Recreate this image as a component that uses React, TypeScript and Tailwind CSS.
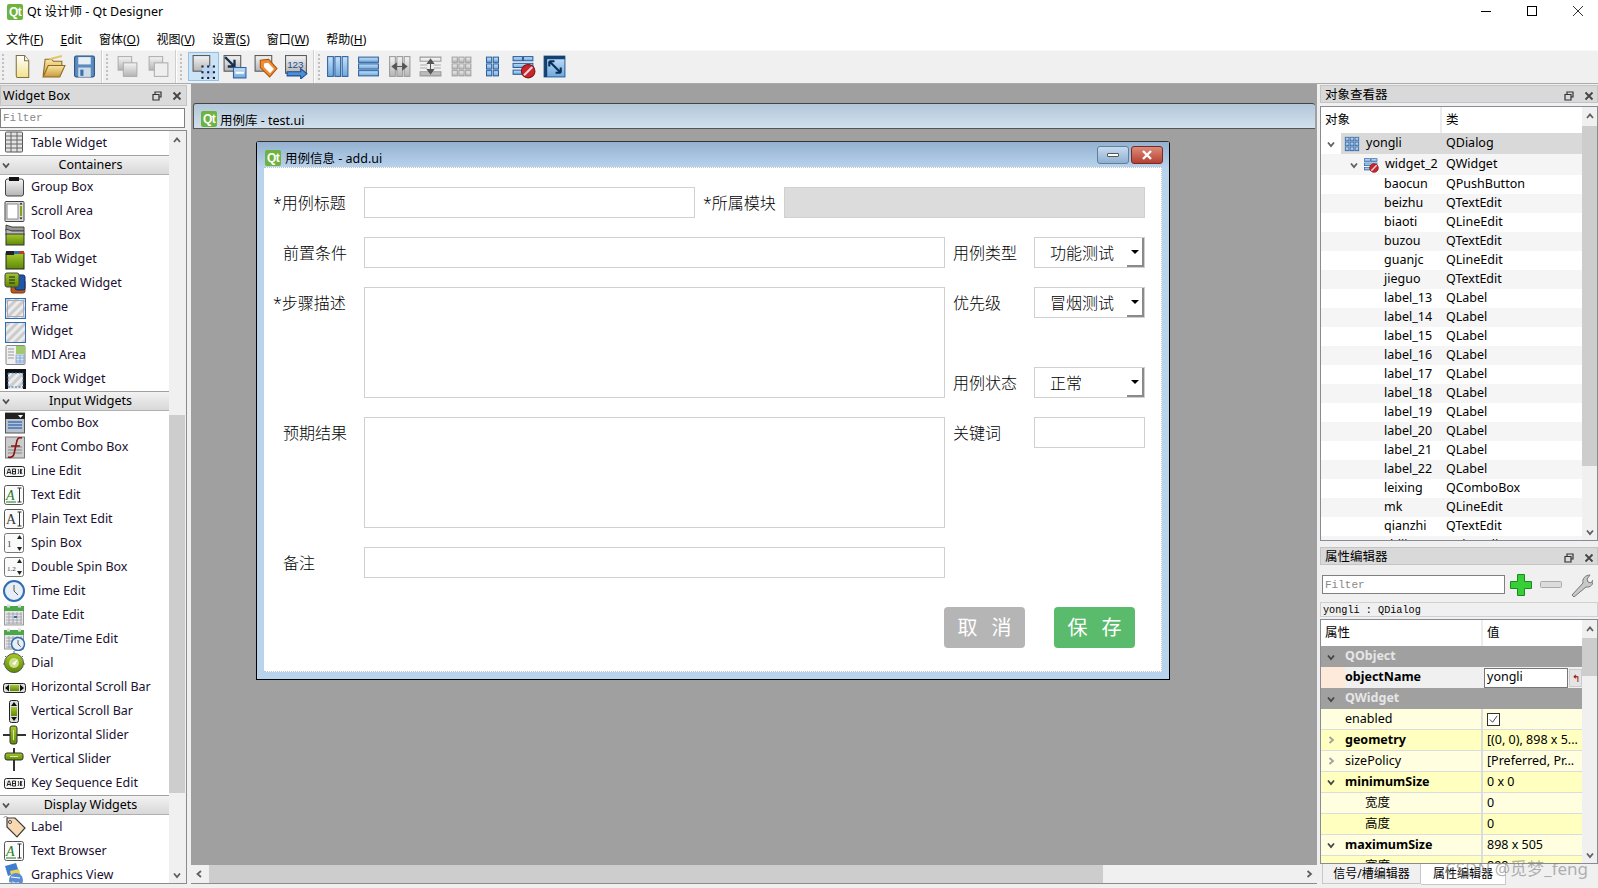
import React from 'react';

const FONT = "font-['Noto_Sans','Noto_Sans_CJK_SC',sans-serif]";

const Ic = ({ children, size = 'h-6 w-6' }: { children: React.ReactNode; size?: string }) => (
  <svg viewBox="0 0 24 24" className={`${size} shrink-0`}>
    {children}
  </svg>
);

const Chevron = ({ dir = 'down', color = '#606060' }: { dir?: 'up' | 'down' | 'left' | 'right'; color?: string }) => {
  const pts = {
    up: '2,7 5,3.5 8,7',
    down: '2,3.5 5,7 8,3.5',
    left: '7,2 3.5,5 7,8',
    right: '3.5,2 7,5 3.5,8',
  }[dir];
  return (
    <svg viewBox="0 0 10 10" className="h-[10px] w-[10px] shrink-0">
      <polyline points={pts} fill="none" stroke={color} strokeWidth="1.8" />
    </svg>
  );
};

const FloatClose = () => (
  <div className="flex items-center gap-[10px]">
    <svg viewBox="0 0 10 10" className="h-[10px] w-[10px]">
      <path d="M3 3V1h6v5H7M1 3.5h6v5.5H1z" fill="none" stroke="#333" strokeWidth="1.2" />
    </svg>
    <svg viewBox="0 0 10 10" className="h-[10px] w-[10px]">
      <path d="M1.5 1.5l7 7M8.5 1.5l-7 7" stroke="#444" strokeWidth="1.8" />
    </svg>
  </div>
);

const Defs = () => (
  <svg className="absolute h-0 w-0">
    <defs>
      <linearGradient id="gGray" x1="0" y1="0" x2="0" y2="1">
        <stop offset="0" stopColor="#f4f4f4" />
        <stop offset="1" stopColor="#b4b4b4" />
      </linearGradient>
      <linearGradient id="gGreen" x1="0" y1="0" x2="0" y2="1">
        <stop offset="0" stopColor="#a6c82a" />
        <stop offset="1" stopColor="#5f8a08" />
      </linearGradient>
      <linearGradient id="gFolder" x1="0" y1="0" x2="0" y2="1">
        <stop offset="0" stopColor="#fbe7a6" />
        <stop offset="1" stopColor="#c99a3c" />
      </linearGradient>
      <linearGradient id="gPage" x1="0" y1="0" x2="0" y2="1">
        <stop offset="0" stopColor="#ffffff" />
        <stop offset="1" stopColor="#f3e28c" />
      </linearGradient>
      <linearGradient id="gBlue" x1="0" y1="0" x2="0" y2="1">
        <stop offset="0" stopColor="#c6e2fa" />
        <stop offset="1" stopColor="#6ea8dc" />
      </linearGradient>
      <pattern id="hatch" width="6" height="6" patternUnits="userSpaceOnUse" patternTransform="rotate(45)">
        <rect width="6" height="6" fill="#ececec" />
        <rect width="3" height="6" fill="#cccccc" />
      </pattern>
    </defs>
  </svg>
);

const AI = ({ green }: { green?: boolean }) => (
  <>
    <rect x="2.5" y="2.5" width="19" height="19" rx="2" fill="#fafafa" stroke="#555" />
    <text x="4" y="17" fontSize="14" fontFamily="Liberation Serif, serif" fontStyle={green ? 'italic' : 'normal'} fill={green ? '#1d7a1d' : '#333'}>
      A
    </text>
    {green && <path d="M4 19h10" stroke="#1d7a1d" />}
    <path d="M15.5 5h4M17.5 5v14M15.5 19h4" stroke="#333" fill="none" />
  </>
);

const Spin = ({ t }: { t: string }) => (
  <>
    <rect x="2.5" y="2.5" width="19" height="19" rx="2" fill="#fafafa" stroke="#777" />
    <text x="5" y="16" fontSize={t.length > 1 ? 7 : 9} fontFamily="Liberation Serif, serif" fill="#333">
      {t}
    </text>
    <path d="M15 8l2.5-4 2.5 4zM15 16l2.5 4 2.5-4z" fill="#222" />
  </>
);

const LineEd = () => (
  <>
    <rect x="2.5" y="7.5" width="20" height="10" rx="2" fill="#f4f4f4" stroke="#222" />
    <path d="M5 15l1.5-5h1l1.500 5M5.600 13.500h2.800M10.500 10h3v5h-3zM10.500 12.500h3M16 10c1 1.500 1 3.500 0 5M18.500 10v5M20 10c-1 1.500-1 3.500 0 5" stroke="#111" strokeWidth="0.9" fill="none" />
  </>
);

const Clock = ({ cx = 12, cy = 12, r = 10 }: { cx?: number; cy?: number; r?: number }) => (
  <>
    <circle cx={cx} cy={cy} r={r} fill="#e8eef6" stroke="#2f6db5" strokeWidth={r > 8 ? 2 : 1.5} />
    <path d={`M${cx} ${cy - r * 0.6}V${cy}L${cx + r * 0.4} ${cy + r * 0.4}`} stroke="#555" fill="none" />
  </>
);

const Calendar = () => (
  <>
    <rect x="2.5" y="4" width="19" height="18" fill="#e6e6e6" stroke="#999" />
    <rect x="2" y="3" width="20" height="5" fill="#4aa84a" />
    <rect x="5" y="1.5" width="3" height="3" fill="#ddd" />
    <rect x="16" y="1.5" width="3" height="3" fill="#ddd" />
    <path d="M4 11h16M4 14h16M4 17h16M4 20h16M7 9v12M11 9v12M15 9v12M19 9v12" stroke="#9a9aa8" strokeWidth="0.8" />
  </>
);

const widgetIcons: Record<string, React.ReactNode> = {
  table: (
    <>
      <rect x="3.5" y="1" width="17" height="20" rx="1" fill="#e4e4e4" stroke="#555" />
      <path d="M3.500 5h17M3.500 9h17M3.500 13h17M3.500 17h17M9 1v20M15 1v20" stroke="#666" />
    </>
  ),
  group: (
    <>
      <rect x="3.5" y="4" width="18" height="17" rx="2" fill="url(#gGray)" stroke="#444" />
      <rect x="7" y="2" width="10" height="4" fill="#111" />
    </>
  ),
  scroll: (
    <>
      <rect x="3" y="2.5" width="19" height="20" rx="1" fill="#ddd" stroke="#444" />
      <rect x="5" y="5" width="11" height="15" fill="#fff" stroke="#888" />
      <rect x="18" y="7" width="2" height="10" fill="#7da513" />
      <path d="M17.500 5.500h3l-1.500-2zM17.500 18.500h3l-1.500 2z" fill="#111" />
    </>
  ),
  toolbox: (
    <>
      <path d="M4 2l6 2h12v4H4z" fill="#999" stroke="#444" />
      <path d="M4 6l6 2h12v4H4z" fill="#bbb" stroke="#444" />
      <rect x="4" y="11" width="18" height="11" fill="url(#gGreen)" stroke="#333" />
    </>
  ),
  tab: (
    <>
      <rect x="4" y="6" width="18" height="16" fill="url(#gGreen)" stroke="#222" />
      <rect x="4" y="4" width="8" height="4" fill="#222" />
      <rect x="12" y="4" width="5" height="3" fill="#2b6fb5" />
      <rect x="17" y="4" width="5" height="3" fill="#c03a2a" />
    </>
  ),
  stacked: (
    <>
      <rect x="9" y="9" width="14" height="13" rx="2" fill="#bf5a16" stroke="#7a3208" />
      <rect x="13" y="4" width="10" height="15" rx="2" fill="#1f57a8" stroke="#0b2f6a" />
      <rect x="3" y="2" width="14" height="14" rx="2" fill="url(#gGreen)" stroke="#444" />
      <path d="M7 6h6M7 9h6M7 12h6" stroke="#222" strokeWidth="1.2" />
    </>
  ),
  frame: (
    <>
      <rect x="3.5" y="3.5" width="20" height="20" fill="url(#hatch)" stroke="#2f6db5" />
      <rect x="5.5" y="5.5" width="16" height="16" fill="none" stroke="#aab" />
    </>
  ),
  widget: <rect x="3.5" y="3.5" width="20" height="20" fill="url(#hatch)" stroke="#2f6db5" />,
  mdi: (
    <>
      <rect x="4" y="2.5" width="19" height="19" rx="1" fill="#f0f0f0" stroke="#888" />
      <rect x="14" y="3" width="9" height="8" fill="#9fc96a" />
      <path d="M6 6h6M6 9h6M6 12h6M6 15h6" stroke="#999" />
      <rect x="14" y="12" width="8" height="8" fill="#cfe2f5" stroke="#6a8fc0" strokeWidth="0.6" />
      <path d="M14 15h8M14 18h8M18 12v8" stroke="#6a8fc0" strokeWidth="0.6" />
    </>
  ),
  dock: (
    <>
      <rect x="3" y="2" width="22" height="20" fill="#111" />
      <rect x="6" y="6" width="15" height="16" fill="#e6e6e6" />
      <rect x="6" y="6" width="15" height="14" fill="url(#hatch)" stroke="#2f6db5" strokeDasharray="2 1.5" />
    </>
  ),
  combo: (
    <>
      <rect x="3.5" y="2" width="19" height="20" fill="#b9c2cc" stroke="#555" />
      <rect x="3" y="2" width="20" height="6" fill="#222" />
      <path d="M16 4h5l-2.500 3z" fill="#fff" />
      <path d="M6 11h14M6 14h14M6 17h14" stroke="#5d87bd" strokeWidth="2" />
    </>
  ),
  font: (
    <>
      <rect x="3.5" y="2" width="19" height="21" fill="#ccc" stroke="#777" />
      <path d="M6 12h14M6 15h14M6 18h14" stroke="#aaa" strokeWidth="2" />
      <path d="M20 3c-5-1-5 2-6 7l-2 9c-.5 2.500-3 4-6 3M9 11h9" fill="none" stroke="#8a1414" strokeWidth="1.6" />
    </>
  ),
  line: <LineEd />,
  text: <AI green />,
  plain: <AI />,
  spin: <Spin t="1" />,
  dspin: <Spin t="1.2" />,
  time: <Clock />,
  date: (
    <>
      <Calendar />
      <rect x="12" y="13" width="3" height="2" fill="#2f6db5" />
    </>
  ),
  datetime: (
    <>
      <Calendar />
      <Clock cx={16} cy={17} r={6.5} />
    </>
  ),
  dial: (
    <>
      <circle cx="12" cy="12" r="9.5" fill="url(#gGreen)" stroke="#555" />
      <path d="M3 5l2 2M21 5l-2 2M12 0v3M1 13h2M21 13h2" stroke="#666" />
      <circle cx="12" cy="12" r="5" fill="#cfdc8a" />
      <path d="M10 13l6-5-3 6z" fill="#fff" />
    </>
  ),
  hscroll: (
    <>
      <rect x="1.5" y="8.5" width="22" height="9" rx="2" fill="#ddd" stroke="#222" />
      <path d="M7 9.500v7l-4-3.500zM18 9.500v7l4-3.500z" fill="#111" />
      <rect x="8" y="10" width="9" height="6" fill="url(#gGreen)" />
    </>
  ),
  vscroll: (
    <>
      <rect x="7.5" y="1.5" width="9" height="22" rx="2" fill="#ddd" stroke="#222" />
      <path d="M9 7h6l-3-4zM9 18h6l-3 4z" fill="#111" />
      <rect x="9" y="8" width="6" height="9" fill="url(#gGreen)" />
    </>
  ),
  hslider: (
    <>
      <path d="M1 12h23" stroke="#333" strokeWidth="2" />
      <rect x="8" y="3" width="7" height="18" rx="2" fill="url(#gGreen)" stroke="#333" />
      <path d="M11.500 7v10" stroke="#dfe8a8" />
    </>
  ),
  vslider: (
    <>
      <path d="M12 1v23" stroke="#333" strokeWidth="2" />
      <rect x="3" y="6" width="18" height="7" rx="2" fill="url(#gGreen)" stroke="#333" />
      <path d="M8 9.500h8" stroke="#dfe8a8" />
    </>
  ),
  key: <LineEd />,
  label: (
    <>
      <path d="M2 3c0-2 3-2 4 0" stroke="#888" fill="none" />
      <path d="M5 3h8l10 10-8 9L5 12z" fill="#f8d9b4" stroke="#3c3c3c" strokeWidth="1.2" />
      <circle cx="8" cy="7" r="1.5" fill="#fff" stroke="#444" />
    </>
  ),
  browser: <AI green />,
  graphics: (
    <>
      <path d="M3 3l11-3 3 9-11 4z" fill="#3f7fcf" />
      <path d="M8 8l9-2 2 8-9 3z" fill="#e8d25a" />
      <circle cx="14" cy="17" r="7" fill="#5a8cd6" />
      <path d="M9 14l9 1" stroke="#fff" />
      <text x="6" y="23" fontSize="7" fontFamily="Liberation Sans, sans-serif" fill="#eef">
        abc
      </text>
    </>
  ),
};

type WbItem = string | [string, string];
const widgetBox: WbItem[] = [
  ['table', 'Table Widget'],
  'Containers',
  ['group', 'Group Box'],
  ['scroll', 'Scroll Area'],
  ['toolbox', 'Tool Box'],
  ['tab', 'Tab Widget'],
  ['stacked', 'Stacked Widget'],
  ['frame', 'Frame'],
  ['widget', 'Widget'],
  ['mdi', 'MDI Area'],
  ['dock', 'Dock Widget'],
  'Input Widgets',
  ['combo', 'Combo Box'],
  ['font', 'Font Combo Box'],
  ['line', 'Line Edit'],
  ['text', 'Text Edit'],
  ['plain', 'Plain Text Edit'],
  ['spin', 'Spin Box'],
  ['dspin', 'Double Spin Box'],
  ['time', 'Time Edit'],
  ['date', 'Date Edit'],
  ['datetime', 'Date/Time Edit'],
  ['dial', 'Dial'],
  ['hscroll', 'Horizontal Scroll Bar'],
  ['vscroll', 'Vertical Scroll Bar'],
  ['hslider', 'Horizontal Slider'],
  ['vslider', 'Vertical Slider'],
  ['key', 'Key Sequence Edit'],
  'Display Widgets',
  ['label', 'Label'],
  ['browser', 'Text Browser'],
  ['graphics', 'Graphics View'],
];

const QtLogo = () => (
  <div className="flex h-[16px] w-[16px] shrink-0 items-center justify-center rounded-[2px] bg-[#6db33f] font-['Liberation_Sans',sans-serif] text-[12px] leading-none font-bold tracking-tighter text-white">
    Qt
  </div>
);

const Grip = () => (
  <div className="mr-[2px] ml-[2px] flex h-[26px] w-[3px] flex-col justify-between">
    {[0, 1, 2, 3, 4, 5, 6].map((i) => (
      <div key={i} className="h-[2px] w-[2px] bg-[#c0c0c0]" />
    ))}
  </div>
);

const Sep = () => <div className="mx-[1px] h-[33px] w-[2px] border-r border-l border-r-white border-l-[#cfcfcf]" />;

const Bars = ({ vertical, gray }: { vertical?: boolean; gray?: boolean }) => {
  const fill = gray ? 'url(#gGray)' : 'url(#gBlue)';
  const stroke = gray ? '#9a9a9a' : '#2c5f9e';
  return (
    <>
      {[0, 1, 2].map((i) =>
        vertical ? (
          <rect key={i} x={2.5 + i * 7} y="2.5" width="5.5" height="19" fill={fill} stroke={stroke} />
        ) : (
          <rect key={i} x="2.5" y={3 + i * 6.5} width="19" height="5" fill={fill} stroke={stroke} />
        ),
      )}
    </>
  );
};

const Grid3 = ({ gray, full }: { gray?: boolean; full?: boolean }) => (
  <>
    {[0, 1, 2].map((r) =>
      (gray || full ? [0, 1, 2] : [0.5, 1.5]).map((c) => (
        <rect
          key={`${r}-${c}`}
          x={3 + c * 6.5}
          y={3 + r * 6.5}
          width="5"
          height="5"
          fill={gray ? 'url(#gGray)' : 'url(#gBlue)'}
          stroke={gray ? '#a0a0a0' : '#2c5f9e'}
        />
      )),
    )}
  </>
);

const BreakLayout = () => (
  <>
    <rect x="2" y="2.5" width="9" height="4" fill="url(#gBlue)" stroke="#2c5f9e" />
    <rect x="12" y="2.5" width="9" height="4" fill="url(#gBlue)" stroke="#2c5f9e" />
    <rect x="2" y="9" width="19" height="4" fill="url(#gBlue)" stroke="#2c5f9e" />
    <rect x="2" y="15.5" width="10" height="4" fill="url(#gBlue)" stroke="#2c5f9e" />
    <circle cx="16.5" cy="16.5" r="6.5" fill="#c8262c" stroke="#7c1014" />
    <path d="M12.500 20.500l8-8" stroke="#f3d9d9" strokeWidth="2" />
  </>
);

const Copies = ({ light }: { light?: boolean }) => (
  <>
    <rect x="3" y="2.5" width="13" height="13" fill="url(#gGray)" stroke="#adadad" />
    <rect x="8" y="8.5" width="13" height="13" fill={light ? '#efefef' : 'url(#gGray)'} stroke="#adadad" />
  </>
);

const handles: [number, number][] = [
  [10, 11],
  [15.5, 11],
  [21, 11],
  [10, 16.5],
  [21, 16.5],
  [10, 22],
  [15.5, 22],
  [21, 22],
];

const toolbarGroups: React.ReactNode[][] = [
  [
    <>
      <path d="M6 1.500h8l4 5v16H7c-1 0-1-1-1-2z" fill="url(#gPage)" stroke="#7d7040" />
      <path d="M14 1.500v5h4" fill="#fff" stroke="#7d7040" />
    </>,
    <>
      <path d="M2 21l2-16h6l2 2h8v4" fill="url(#gFolder)" stroke="#8b6a1e" />
      <path d="M2 22l5-11h16l-5 11z" fill="url(#gFolder)" stroke="#8b6a1e" />
      <path d="M8 5l12-3" stroke="#e4c36a" strokeWidth="2" />
    </>,
    <>
      <rect x="2.5" y="2" width="19" height="20" rx="1.5" fill="#5a8cc0" stroke="#234e80" />
      <rect x="6" y="3" width="12" height="7" fill="#e6eef6" />
      <rect x="6" y="13" width="12" height="9" fill="#cfdbe8" />
      <rect x="8" y="15" width="3" height="6" fill="#3b72ad" />
    </>,
  ],
  [<Copies />, <Copies light />],
  [
    <>
      <rect x="2" y="1.5" width="16" height="15" fill="url(#gGray)" stroke="#555" />
      <rect x="10.5" y="11.5" width="11" height="11" fill="#bcd4f2" />
      {handles.map(([x, y]) => (
        <rect key={`${x}-${y}`} x={x} y={y} width="2" height="2" fill="#14243a" />
      ))}
      <rect x="15.5" y="16.5" width="2" height="2" fill="#14243a" />
    </>,
    <>
      <rect x="2" y="1.5" width="16" height="15" fill="url(#gGray)" stroke="#555" />
      <path d="M3 3l9 9M12 5.500V12H5.500" stroke="#14304f" strokeWidth="2.2" fill="none" />
      <rect x="11" y="13" width="12" height="10" fill="url(#gBlue)" stroke="#2c5f9e" />
      <rect x="13" y="17" width="8" height="2" fill="#fff" />
    </>,
    <>
      <rect x="2" y="1.5" width="16" height="15" fill="url(#gGray)" stroke="#555" />
      <path d="M7 6l8-1 8 9-7 8-9-9z" fill="#f28a30" stroke="#a65411" />
      <path d="M10.500 9l4-.5 5.500 6-3.500 4-6-6z" fill="#fff" />
    </>,
    <>
      <rect x="1.5" y="1.5" width="20" height="17" fill="url(#gGray)" stroke="#555" />
      <text x="3" y="13" fontSize="9.5" fontFamily="Liberation Sans, sans-serif" fill="#1d4d8f">
        123
      </text>
      <path d="M3 17h13v-3l6 5-6 5v-3H3z" fill="#4d8fd6" stroke="#1d4d8f" />
    </>,
  ],
  [
    <Bars vertical />,
    <Bars />,
    <>
      <Bars vertical gray />
      <path d="M5 12h14M5 12l4-3v6zM19 12l-4-3v6z" fill="#555" stroke="#555" />
    </>,
    <>
      <path d="M2 3h20v4H2zM2 17h20v4H2z" fill="url(#gGray)" stroke="#9a9a9a" />
      <path d="M12 5v14M12 5L9 9h6zM12 19l-3-4h6z" fill="#555" stroke="#555" />
      <path d="M2 10.500h7M15 10.500h7M2 13.500h7M15 13.500h7" stroke="#aaa" />
    </>,
    <Grid3 gray />,
    <Grid3 />,
    <BreakLayout />,
    <>
      <rect x="2" y="2" width="20" height="20" fill="url(#gBlue)" stroke="#2c5f9e" />
      <path d="M2 2h20v3H5v17H2z" fill="#16406f" />
      <path d="M7 7l11 11M7 7h5M7 7v5M18 18h-5M18 18v-5" stroke="#0a2f58" strokeWidth="2" fill="none" />
    </>,
  ],
];

const groupOffset = ['ml-0', 'ml-[1px]', 'ml-[3px]', '-ml-[1px]'];

const Toolbar = () => (
  <div className="flex h-[34px] shrink-0 items-center border-t border-b border-t-[#f8f8f8] border-b-[#aaaaaa] bg-[#f0f0f0] pb-[1px]">
    {toolbarGroups.map((group, gi) => (
      <React.Fragment key={gi}>
        <Grip />
        <div className={`flex ${groupOffset[gi]}`}>
          {group.map((icon, i) => (
            <div
              key={i}
              className={`flex h-[29px] w-[31px] items-center justify-center ${
                gi === 2 && i === 0 ? 'border border-[#8fc1ea] bg-[#cde4f7]' : ''
              }`}
            >
              <Ic size="h-[25px] w-[25px]">{icon}</Ic>
            </div>
          ))}
        </div>
        {gi < 3 && <Sep />}
      </React.Fragment>
    ))}
  </div>
);

const WidgetBox = () => (
  <div className="flex w-[187px] shrink-0 flex-col">
    <div className="mt-[1px] flex h-[21px] items-center justify-between border border-[#c4c4c4] bg-[#dadada] pt-[1px] pr-[4px] pl-[2px] text-[12.5px]">
      <span>Widget Box</span>
      <FloatClose />
    </div>
    <div className="mt-[2px] flex h-[20px] w-[185px] items-center border border-[#808080] bg-white pt-[1px] pl-[2px] font-['Liberation_Mono',monospace] text-[11px] text-[#888]">
      Filter
    </div>
    <div className="mt-[2px] flex h-[754px] overflow-hidden border-t border-r border-b border-[#8c8c8c]">
      <div className="w-[169px] overflow-hidden bg-white">
        {widgetBox.map((item) =>
          typeof item === 'string' ? (
            <div
              key={item}
              className="relative flex h-[20px] items-center justify-center border-t border-b border-t-[#a0a0a0] border-b-[#b0b0b0] bg-gradient-to-b from-[#f2f2f2] to-[#d8d8d8] pl-[12px] text-[12.5px]"
            >
              <span className="absolute left-[1px]">
                <Chevron color="#505050" />
              </span>
              {item}
            </div>
          ) : (
            <div key={item[1]} className="flex h-[24px] items-center gap-[5px] pl-[2px] text-[12.5px] text-[#1a1030]">
              <Ic>{widgetIcons[item[0]]}</Ic>
              <span>{item[1]}</span>
            </div>
          ),
        )}
      </div>
      <div className="flex w-[16px] flex-col items-center bg-[#f0f0f0]">
        <div className="flex h-[17px] items-center">
          <Chevron dir="up" />
        </div>
        <div className="mt-[267px] h-[378px] w-full bg-[#cdcdcd]" />
        <div className="mt-auto flex h-[17px] items-center">
          <Chevron />
        </div>
      </div>
    </div>
  </div>
);

const Field = ({ w, disabled, h = 'h-[31px]' }: { w: string; disabled?: boolean; h?: string }) => (
  <div className={`${w} ${h} shrink-0 border border-[#d0d0d0] ${disabled ? 'bg-[#dcdcdc]' : 'bg-white'}`} />
);

const Combo = ({ value }: { value: string }) => (
  <div className="flex h-[31px] w-[111px] shrink-0 items-center border border-[#d0d0d0] bg-white pl-[15px]">
    <span className="flex-1">{value}</span>
    <div className="flex h-[29px] w-[17px] items-center justify-center border-r-2 border-b-2 border-[#8a8a8a]">
      <div className="h-0 w-0 border-t-[4px] border-r-[4px] border-l-[4px] border-t-black border-r-transparent border-l-transparent" />
    </div>
  </div>
);

const FormLabel = ({ w = 'w-[100px]', pl, children }: { w?: string; pl: string; children: React.ReactNode }) => (
  <div className={`${w} ${pl} flex h-[31px] shrink-0 items-center whitespace-nowrap`}>{children}</div>
);

const Dialog = () => (
  <div className="absolute top-[57px] left-[65px] flex h-[539px] w-[914px] flex-col rounded-t-[3px] border border-t-[#333] border-r-black border-b-black border-l-black bg-[#b9d3ec]">
    <div className="flex h-[25px] shrink-0 items-end bg-gradient-to-b from-[#94b1cf] to-[#b7d2ec] pr-[6px] pb-[1px] pl-[8px]">
      <QtLogo />
      <span className="ml-[4px] flex-1 translate-y-[1px] text-[12.5px] leading-[16px]">用例信息 - add.ui</span>
      <div className="mb-[2px] flex gap-[2px]">
        <div className="flex h-[18px] w-[32px] items-center justify-center rounded-[3px] border border-[#5f7f9f] bg-gradient-to-b from-[#c8dcf0] to-[#8fb0d0]">
          <div className="h-[4px] w-[12px] rounded-[1px] border border-[#555] bg-white" />
        </div>
        <div className="flex h-[18px] w-[32px] items-center justify-center rounded-[3px] border border-[#7a2a25] bg-gradient-to-b from-[#dc8b7b] to-[#b53f30]">
          <svg viewBox="0 0 12 10" className="h-[10px] w-[12px]">
            <path d="M2 1l8 8M10 1l-8 8" stroke="#fff" strokeWidth="2.4" />
          </svg>
        </div>
      </div>
    </div>
    <div className="mx-[7px] flex h-[505px] flex-col gap-[19px] border-t border-r border-b border-dotted border-[#c4c4c4] bg-white pt-[19px] text-[16px] font-light text-black">
      <div className="flex">
        <FormLabel pl="pl-[9px]">*用例标题</FormLabel>
        <Field w="w-[331px]" />
        <FormLabel w="w-[89px]" pl="pl-[8px]">
          *所属模块
        </FormLabel>
        <Field w="w-[361px]" disabled />
      </div>
      <div className="flex">
        <FormLabel pl="pl-[19px]">前置条件</FormLabel>
        <Field w="w-[581px]" />
        <FormLabel w="w-[89px]" pl="pl-[8px]">
          用例类型
        </FormLabel>
        <Combo value="功能测试" />
      </div>
      <div className="flex">
        <FormLabel pl="pl-[9px]">*步骤描述</FormLabel>
        <Field w="w-[581px]" h="h-[111px]" />
        <div className="flex h-[111px] flex-col justify-between">
          <div className="flex">
            <FormLabel w="w-[89px]" pl="pl-[8px]">
              优先级
            </FormLabel>
            <Combo value="冒烟测试" />
          </div>
          <div className="flex">
            <FormLabel w="w-[89px]" pl="pl-[8px]">
              用例状态
            </FormLabel>
            <Combo value="正常" />
          </div>
        </div>
      </div>
      <div className="flex">
        <FormLabel pl="pl-[19px]">预期结果</FormLabel>
        <Field w="w-[581px]" h="h-[111px]" />
        <FormLabel w="w-[89px]" pl="pl-[8px]">
          关键词
        </FormLabel>
        <Field w="w-[111px]" />
      </div>
      <div className="flex">
        <FormLabel pl="pl-[19px]">备注</FormLabel>
        <Field w="w-[581px]" />
      </div>
      <div className="mt-[10px] flex justify-end gap-[29px] pr-[26px] font-['Liberation_Serif','Noto_Sans_CJK_SC',serif] text-[20px] font-normal text-white">
        <div className="flex h-[41px] w-[81px] items-center justify-center gap-[14px] rounded-[4px] bg-[#b5b5b5]">
          <span>取</span>
          <span>消</span>
        </div>
        <div className="flex h-[41px] w-[81px] items-center justify-center gap-[14px] rounded-[4px] bg-[#5bbb6d]">
          <span>保</span>
          <span>存</span>
        </div>
      </div>
    </div>
  </div>
);

const MdiArea = () => (
  <div className="relative flex h-[800px] w-[1126px] shrink-0 flex-col border-b border-[#8c8c8c] bg-[#a0a0a0]">
    <div className="absolute top-[19px] left-[2px] flex h-[26px] w-[1122px] items-end rounded-t-[3px] border-t border-b border-l border-t-[#444] border-b-[#555] border-l-[#555] bg-gradient-to-b from-[#b3c7d9] to-[#d2e0ec] pb-[1px] pl-[7px] text-[12.5px]">
      <QtLogo />
      <span className="ml-[3px] translate-y-[2px] leading-[16px]">用例库 - test.ui</span>
    </div>
    <Dialog />
    <div className="mt-auto flex h-[18px] items-center bg-[#f0f0f0] px-[3px]">
      <Chevron dir="left" />
      <div className="ml-[5px] h-full w-[894px] bg-[#cdcdcd]" />
      <div className="ml-auto">
        <Chevron dir="right" />
      </div>
    </div>
  </div>
);

const treeRows: [string, string][] = [
  ['baocun', 'QPushButton'],
  ['beizhu', 'QTextEdit'],
  ['biaoti', 'QLineEdit'],
  ['buzou', 'QTextEdit'],
  ['guanjc', 'QLineEdit'],
  ['jieguo', 'QTextEdit'],
  ['label_13', 'QLabel'],
  ['label_14', 'QLabel'],
  ['label_15', 'QLabel'],
  ['label_16', 'QLabel'],
  ['label_17', 'QLabel'],
  ['label_18', 'QLabel'],
  ['label_19', 'QLabel'],
  ['label_20', 'QLabel'],
  ['label_21', 'QLabel'],
  ['label_22', 'QLabel'],
  ['leixing', 'QComboBox'],
  ['mk', 'QLineEdit'],
  ['qianzhi', 'QTextEdit'],
  ['shijian', 'QLineEdit'],
];

const VBar = ({ top, h }: { top: string; h: string }) => (
  <div className="flex w-[15px] shrink-0 flex-col items-center bg-[#f0f0f0]">
    <div className="flex h-[17px] items-center">
      <Chevron dir="up" />
    </div>
    <div className={`${top} ${h} w-full bg-[#cdcdcd]`} />
    <div className="mt-auto flex h-[17px] items-center">
      <Chevron />
    </div>
  </div>
);

const ObjectInspector = () => (
  <div className="flex h-[435px] border border-[#8a8a94] text-[12.5px]">
    <div className="flex min-w-0 flex-1 flex-col overflow-hidden bg-white">
      <div className="flex h-[26px] shrink-0 items-center">
        <div className="flex h-full w-[121px] items-center border-r-2 border-[#ececec] pl-[4px]">对象</div>
        <div className="pl-[4px]">类</div>
      </div>
      <div className="flex h-[21px] shrink-0 items-center">
        <div className="flex h-full w-[20px] items-center justify-center">
          <Chevron />
        </div>
        <div className="flex h-full flex-1 items-center bg-[#d9d9d9] pl-[2px]">
          <Ic size="h-[18px] w-[18px]">
            <Grid3 full />
          </Ic>
          <span className="ml-[5px] w-[80px]">yongli</span>
          <span>QDialog</span>
        </div>
      </div>
      <div className="flex h-[21px] shrink-0 items-center bg-[#f5f5f5] pl-[24px]">
        <div className="flex w-[18px] items-center justify-center">
          <Chevron />
        </div>
        <Ic size="h-[16px] w-[16px]">
          <BreakLayout />
        </Ic>
        <span className="ml-[6px] w-[61px]">widget_2</span>
        <span>QWidget</span>
      </div>
      {treeRows.map(([name, cls], i) => (
        <div key={name} className={`flex h-[19px] shrink-0 items-center pl-[63px] ${i % 2 ? 'bg-[#f5f5f5]' : 'bg-white'}`}>
          <span className="w-[62px]">{name}</span>
          <span>{cls}</span>
        </div>
      ))}
    </div>
    <VBar top="mt-[2px]" h="h-[340px]" />
  </div>
);

type PropRow = { name: string; value?: React.ReactNode; bold?: boolean; arrow?: 'down' | 'right'; indent?: boolean; tone: string };
const propRows: PropRow[] = [
  {
    name: 'enabled',
    tone: 'bg-[#ffffdf]',
    value: (
      <div className="flex h-[13px] w-[13px] items-center justify-center border border-[#333] bg-white">
        <svg viewBox="0 0 12 12" className="h-[11px] w-[11px]">
          <path d="M2 6l3 3 5-7" fill="none" stroke="#333" />
        </svg>
      </div>
    ),
  },
  { name: 'geometry', bold: true, arrow: 'right', tone: 'bg-[#ffffbf]', value: '[(0, 0), 898 x 5...' },
  { name: 'sizePolicy', arrow: 'right', tone: 'bg-[#ffffdf]', value: '[Preferred, Pr...' },
  { name: 'minimumSize', bold: true, arrow: 'down', tone: 'bg-[#ffffbf]', value: '0 x 0' },
  { name: '宽度', indent: true, tone: 'bg-[#ffffdf]', value: '0' },
  { name: '高度', indent: true, tone: 'bg-[#ffffbf]', value: '0' },
  { name: 'maximumSize', bold: true, arrow: 'down', tone: 'bg-[#ffffdf]', value: '898 x 505' },
  { name: '宽度', indent: true, tone: 'bg-[#ffffbf]', value: '898' },
];

const GroupRow = ({ name }: { name: string }) => (
  <div className="flex h-[21px] shrink-0 items-center bg-[#a0a0a0] pl-[5px] font-bold text-[#e6e6e6]">
    <Chevron color="#444" />
    <span className="ml-[9px]">{name}</span>
  </div>
);

const PropertyEditor = () => (
  <div className="flex flex-col text-[12.5px]">
    <div className="mt-[10px] flex h-[19px] items-center pl-[2px]">
      <div className="flex h-full w-[183px] items-center border border-[#808080] bg-white pt-[2px] pl-[2px] font-['Liberation_Mono',monospace] text-[11px] text-[#888]">
        Filter
      </div>
      <svg viewBox="0 0 24 24" className="ml-[4px] h-[24px] w-[24px]">
        <path d="M8.500 1.500h7v7h7v7h-7v7h-7v-7h-7v-7h7z" fill="#37cf37" stroke="#1a8a1a" />
      </svg>
      <svg viewBox="0 0 24 24" className="ml-[6px] h-[24px] w-[24px]">
        <rect x="1.5" y="8.5" width="21" height="6" rx="1" fill="#dcdcdc" stroke="#aaa" />
      </svg>
      <svg viewBox="0 0 24 24" className="ml-[6px] h-[24px] w-[24px]">
        <path d="M3 22l11-12c-1-4 2-8 7-8l-3 4 1 3 3 1 2-3c1 4-3 8-7 7L5 24z" fill="#c8c8c8" stroke="#777" />
      </svg>
    </div>
    <div className="mt-[8px] flex h-[15px] items-center border border-[#d0d0d0] pt-[3px] pl-[2px] font-['Liberation_Mono',monospace] text-[10.2px]">
      yongli : QDialog
    </div>
    <div className="mt-[2px] flex h-[245px] border border-[#8a8a94]">
      <div className="flex min-w-0 flex-1 flex-col overflow-hidden bg-white">
        <div className="flex h-[26px] shrink-0 items-center">
          <div className="flex h-full w-[162px] items-center border-r-2 border-[#ececec] pl-[4px]">属性</div>
          <div className="pl-[4px]">值</div>
        </div>
        <GroupRow name="QObject" />
        <div className="flex h-[21px] shrink-0 items-center bg-[#f0f0f0]">
          <div className="h-full w-[24px] bg-[#fdeadb]" />
          <span className="w-[138px] font-bold">objectName</span>
          <div className="flex h-[20px] flex-1 items-center gap-[1px] pl-[1px]">
            <div className="flex h-[20px] w-[84px] items-center border border-[#777] bg-white pl-[2px]">yongli</div>
            <div className="flex h-[18px] w-[13px] items-center justify-center border border-[#ccc] bg-[#e4e4e4] text-[10px] leading-none text-[#900]">
              ↰
            </div>
          </div>
        </div>
        <GroupRow name="QWidget" />
        {propRows.map((r, i) => (
          <div key={i} className={`flex h-[21px] shrink-0 items-center border-b border-[#dcdcdc] ${r.tone}`}>
            <div className="flex w-[24px] justify-center pr-[4px]">
              {r.arrow && <Chevron dir={r.arrow} color={r.arrow === 'right' ? '#a0a0a0' : '#444'} />}
            </div>
            <span className={`h-full w-[138px] border-r-2 border-[#dcdcdc] leading-[20px] ${r.bold ? 'font-bold' : ''} ${r.indent ? 'pl-[20px]' : ''}`}>
              {r.name}
            </span>
            <div className="pl-[4px]">{r.value}</div>
          </div>
        ))}
      </div>
      <VBar top="mt-[1px]" h="h-[38px]" />
    </div>
    <div className="relative flex h-[21px] pl-[2px] text-[12px]">
      <div className="flex h-[20px] w-[99px] items-center justify-center border-r border-b border-l border-[#c8c8c8]">信号/槽编辑器</div>
      <div className="flex h-[21px] w-[85px] items-center justify-center border-r border-b border-[#c8c8c8] bg-white">属性编辑器</div>
      <span className="absolute top-[-6px] left-[125px] text-[17px] leading-[22px] whitespace-nowrap text-[#80808099]">CSDN @觅梦_feng</span>
    </div>
  </div>
);

const DockHeader = ({ title }: { title: string }) => (
  <div className="flex h-[18px] shrink-0 items-center justify-between border border-[#c4c4c4] bg-[#d9d9d9] pt-[3px] pr-[3px] pl-[4px] text-[12.5px]">
    <span>{title}</span>
    <FloatClose />
  </div>
);

export default function App() {
  return (
    <div className={`relative flex h-[888px] w-[1598px] flex-col overflow-hidden bg-[#f0f0f0] text-black ${FONT}`}>
      <Defs />
      <div className="flex h-[30px] shrink-0 items-start bg-white pt-[4px] pl-[7px] text-[12.5px]">
        <QtLogo />
        <span className="ml-[4px] leading-[16px]">Qt 设计师 - Qt Designer</span>
        <div className="ml-auto flex items-center gap-[36px] pt-[2px] pr-[15px]">
          <div className="h-[1px] w-[10px] bg-black" />
          <div className="h-[10px] w-[10px] border border-black" />
          <svg viewBox="0 0 10 10" className="h-[10px] w-[10px]">
            <path d="M0 0l10 10M10 0L0 10" stroke="#000" strokeWidth="0.8" />
          </svg>
        </div>
      </div>
      <div className="flex h-[20px] shrink-0 items-center gap-[17px] bg-white pl-[6px] text-[12px]">
        <span>文件(<u>F</u>)</span>
        <span><u>E</u>dit</span>
        <span>窗体(<u>O</u>)</span>
        <span>视图(<u>V</u>)</span>
        <span>设置(<u>S</u>)</span>
        <span>窗口(<u>W</u>)</span>
        <span>帮助(<u>H</u>)</span>
      </div>
      <Toolbar />
      <div className="flex min-h-0 flex-1">
        <WidgetBox />
        <div className="ml-[4px]">
          <MdiArea />
        </div>
        <div className="ml-[3px] flex w-[278px] shrink-0 flex-col pt-[1px]">
          <DockHeader title="对象查看器" />
          <div className="mt-[3px]">
            <ObjectInspector />
          </div>
          <div className="mt-[6px]">
            <DockHeader title="属性编辑器" />
          </div>
          <PropertyEditor />
        </div>
      </div>
    </div>
  );
}
